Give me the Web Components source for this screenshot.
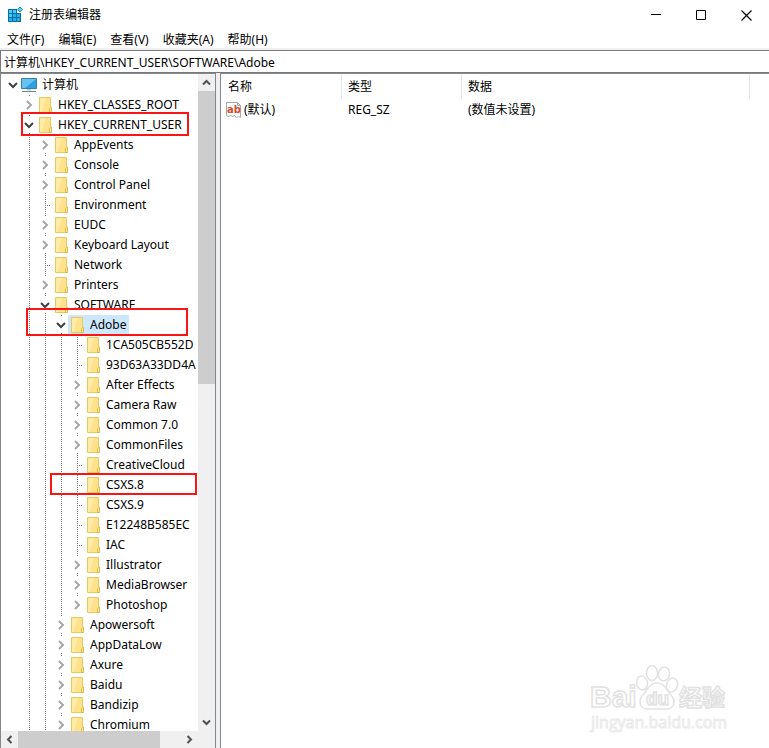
<!DOCTYPE html>
<html lang="zh-CN">
<head>
<meta charset="utf-8">
<title>注册表编辑器</title>
<style>
  html, body {
    height: 100%;
    margin: 0;
  }
  body {
    background: #fff;
    color: #000;
    font: 12px/20px "Noto Sans", "Noto Sans CJK SC", sans-serif;
    overflow: hidden;
  }
</style>
</head>
<body>
<reg-window>
  <title-bar slot="title">注册表编辑器</title-bar>
  <menu-bar slot="menu">
    <menu-entry>文件(F)</menu-entry>
    <menu-entry>编辑(E)</menu-entry>
    <menu-entry>查看(V)</menu-entry>
    <menu-entry>收藏夹(A)</menu-entry>
    <menu-entry>帮助(H)</menu-entry>
  </menu-bar>
  <address-bar slot="address" value="计算机\HKEY_CURRENT_USER\SOFTWARE\Adobe"></address-bar>
  <key-tree slot="tree">
    <reg-key name="计算机" icon="computer" open root>
      <reg-key name="HKEY_CLASSES_ROOT" branch></reg-key>
      <reg-key name="HKEY_CURRENT_USER" open>
        <reg-key name="AppEvents" branch></reg-key>
        <reg-key name="Console" branch></reg-key>
        <reg-key name="Control Panel" branch></reg-key>
        <reg-key name="Environment"></reg-key>
        <reg-key name="EUDC" branch></reg-key>
        <reg-key name="Keyboard Layout" branch></reg-key>
        <reg-key name="Network"></reg-key>
        <reg-key name="Printers" branch></reg-key>
        <reg-key name="SOFTWARE" open>
          <reg-key name="Adobe" open selected>
            <reg-key name="1CA505CB552D"></reg-key>
            <reg-key name="93D63A33DD4A"></reg-key>
            <reg-key name="After Effects" branch></reg-key>
            <reg-key name="Camera Raw" branch></reg-key>
            <reg-key name="Common 7.0" branch></reg-key>
            <reg-key name="CommonFiles" branch></reg-key>
            <reg-key name="CreativeCloud"></reg-key>
            <reg-key name="CSXS.8"></reg-key>
            <reg-key name="CSXS.9"></reg-key>
            <reg-key name="E12248B585EC"></reg-key>
            <reg-key name="IAC"></reg-key>
            <reg-key name="Illustrator" branch></reg-key>
            <reg-key name="MediaBrowser" branch></reg-key>
            <reg-key name="Photoshop" branch last></reg-key>
          </reg-key>
          <reg-key name="Apowersoft" branch></reg-key>
          <reg-key name="AppDataLow" branch></reg-key>
          <reg-key name="Axure" branch></reg-key>
          <reg-key name="Baidu" branch></reg-key>
          <reg-key name="Bandizip" branch></reg-key>
          <reg-key name="Chromium" branch></reg-key>
        </reg-key>
      </reg-key>
    </reg-key>
  </key-tree>
  <value-list slot="values"></value-list>
  <mark-box slot="overlay" style="--x: 21px; --y: 112px; --w: 168px; --h: 24px"></mark-box>
  <mark-box slot="overlay" style="--x: 26px; --y: 308px; --w: 162px; --h: 28px"></mark-box>
  <mark-box slot="overlay" style="--x: 50px; --y: 473px; --w: 147px; --h: 22px"></mark-box>
  <site-mark slot="overlay"></site-mark>
</reg-window>

<script>
function define(name, html, setup) {
  const template = document.createElement('template');
  template.innerHTML = html;

  window.customElements.define(name, class extends HTMLElement {
    constructor() {
      super();
      this.attachShadow({ mode: 'open' });
      this.shadowRoot.appendChild(template.content.cloneNode(true));
    }

    connectedCallback() {
      if (setup) setup.call(this, this.shadowRoot);
    }
  });
}

define('reg-window', `
  <style>
    :host {
      display: flex;
      flex-direction: column;
      position: relative;
      height: 100vh;
      overflow: hidden;
    }
    main {
      flex: 1;
      min-height: 0;
      display: grid;
      grid-template-columns: 216px 1fr;
      gap: 4px;
      background: #f0f0f0;
    }
  </style>
  <slot name="title"></slot>
  <slot name="menu"></slot>
  <slot name="address"></slot>
  <main>
    <slot name="tree"></slot>
    <slot name="values"></slot>
  </main>
  <slot name="overlay"></slot>
`);

define('title-bar', `
  <style>
    :host {
      display: flex;
      align-items: center;
      height: 30px;
      padding-left: 7px;
    }
    h1 {
      flex: 1;
      margin: 0 0 0 6px;
      font-size: 12px;
      font-weight: normal;
    }
    button {
      width: 45px;
      height: 30px;
      padding: 0;
      border: 0;
      background: none;
    }
    button:hover { background: #e5e5e5; }
    svg { display: block; }
    button svg { margin: auto; }
  </style>
  <svg width="16" height="16" viewBox="0 0 16 16">
    <path d="M1 2h9v4h4v9H1z" fill="#0b6ea6"/>
    <path d="M2 3h3v3H2zM6 3h3v3H6zM2 7h3v3H2z" fill="#45cbf5"/>
    <path d="M6 7h3v3H6zM10 7h3v3h-3zM2 11h3v3H2zM6 11h3v3H6zM10 11h3v3h-3z" fill="#1fb0e8"/>
    <path d="M13 0l2.500 2.500L13 5l-2.500-2.500z" fill="#62cdf2" stroke="#1687b6"/>
  </svg>
  <h1><slot></slot></h1>
  <button aria-label="最小化"><svg width="11" height="11"><path d="M0 4.500h10" stroke="#000"/></svg></button>
  <button aria-label="最大化"><svg width="11" height="11"><path d="M.5.5h9v9h-9z" fill="none" stroke="#000"/></svg></button>
  <button aria-label="关闭"><svg width="11" height="11"><path d="M.5.5l10 10M10.500.5l-10 10" stroke="#000" stroke-width="1.200"/></svg></button>
`);

define('menu-bar', `
  <style>
    :host {
      display: flex;
      height: 18px;
      border-bottom: 2px solid #f0f0f0;
    }
  </style>
  <slot></slot>
`);

define('menu-entry', `
  <style>
    :host { display: block; }
    button {
      height: 18px;
      padding: 0 7px;
      border: 0;
      background: none;
      font: inherit;
      color: inherit;
      line-height: 18px;
    }
    button:hover { background: #e5f3ff; }
  </style>
  <button><slot></slot></button>
`);

define('address-bar', `
  <style>
    :host { display: block; }
    input {
      box-sizing: border-box;
      display: block;
      width: 100%;
      height: 23px;
      padding: 0 3px;
      border: 1px solid #7a7a7a;
      border-right: 0;
      border-radius: 0;
      outline: 0;
      background: #fff;
      color: inherit;
      font: inherit;
    }
  </style>
  <input type="text" aria-label="地址">
`, function (root) {
  root.querySelector('input').value = this.getAttribute('value');
});

define('scroll-bar', `
  <style>
    :host {
      display: flex;
      background: #f0f0f0;
    }
    :host([vertical]) { flex-direction: column; }
    button {
      display: grid;
      place-items: center;
      flex: none;
      width: 17px;
      height: 17px;
      padding: 0;
      border: 0;
      background: none;
    }
    :host([vertical]) button { width: auto; }
    .back svg { transform: rotate(180deg); }
    :host([vertical]) .forward svg { transform: rotate(90deg); }
    :host([vertical]) .back svg { transform: rotate(-90deg); }
    path { fill: none; stroke: #505050; stroke-width: 2; }
    .track {
      flex: 1;
      display: flex;
      flex-direction: inherit;
    }
    .thumb {
      flex: 0 0 var(--size);
      background: #cdcdcd;
    }
  </style>
  <button class="back" aria-label="向前滚动"><svg width="9" height="9"><path d="M2.500 1L6 4.500 2.500 8"/></svg></button>
  <div class="track"><div class="thumb"></div></div>
  <button class="forward" aria-label="向后滚动"><svg width="9" height="9"><path d="M2.500 1L6 4.500 2.500 8"/></svg></button>
`);

define('key-tree', `
  <style>
    :host {
      box-sizing: border-box;
      display: grid;
      grid-template: minmax(0, 1fr) 17px / minmax(0, 1fr) 17px;
      min-width: 0;
      min-height: 0;
      border: 1px solid #828790;
      border-bottom: 0;
      background: #f0f0f0;
    }
    .keys {
      overflow: hidden;
      padding: 1px 0 0 4px;
      background: #fff;
      white-space: nowrap;
    }
    .v { --size: 47%; }
    .h { --size: 87%; }
  </style>
  <div class="keys" role="tree"><slot></slot></div>
  <scroll-bar class="v" vertical></scroll-bar>
  <scroll-bar class="h"></scroll-bar>
`);

const folder = `
  <svg width="16" height="16" viewBox="0 0 16 16">
    <path d="M2.500.5h11v9l1 1v5h-12z" fill="#ffe38c" stroke="#e9c75d"/>
    <path d="M3 1h6L5 15H3z" fill="#fff0b8" opacity=".6"/>
    <path d="M12.500 15.500v-4l1-1h1v5z" fill="#ffe9a2" stroke="#e3bb42"/>
  </svg>`;

const computer = `
  <svg width="16" height="16" viewBox="0 0 16 16">
    <path d="M.5 1.500h15v10H.5z" fill="#2d9fe3" stroke="#3b7ea6"/>
    <path d="M1 2h14L4 11H1z" fill="#66c3f3"/>
    <path d="M6 12h4v1.500H6z" fill="#b5c7d2"/>
    <path d="M1 14.500h14" stroke="#6f8796"/>
  </svg>`;

define('reg-key', `
  <style>
    :host {
      display: block;
      background: linear-gradient(#808080 50%, transparent 50%) 8px 0 / 1px 2px repeat-y;
    }
    :host([root]) { background: none; }
    .row {
      display: flex;
      align-items: center;
      height: 20px;
    }
    :host([last]) .row { background: linear-gradient(transparent 50%, #fff 50%); }
    button {
      display: grid;
      place-items: center;
      flex: none;
      width: 15px;
      height: 16px;
      padding: 0;
      border: 0;
      background: #fff;
    }
    .leaf {
      flex: none;
      width: 15px;
      height: 1px;
      background: linear-gradient(90deg, #808080 50%, transparent 50%) 10px 0 / 2px 1px no-repeat,
        linear-gradient(90deg, #808080 50%, transparent 50%) 12px 0 / 2px 1px no-repeat;
    }
    button path { fill: none; stroke: #a6a6a6; stroke-width: 2; }
    :host([open]) button path { stroke: #404040; }
    :host([open]) button svg { transform: rotate(90deg); }
    .item {
      display: flex;
      align-items: center;
      height: 20px;
      padding: 0 3px 0 1px;
    }
    .item svg { flex: none; }
    .name { padding-left: 5px; }
    :host([selected]) .item { background: #cce8ff; }
    .children { display: none; padding-left: 16px; }
    :host([open]) .children { display: block; }
  </style>
  <div class="row" role="treeitem">
    <span class="item"><span class="name"></span></span>
  </div>
  <div class="children" role="group"><slot></slot></div>
`, function (root) {
  const icon = this.getAttribute('icon') === 'computer' ? computer : folder;
  const isBranch = this.hasAttribute('branch') || this.hasAttribute('open');

  root.querySelector('.name').textContent = this.getAttribute('name');
  root.querySelector('.item').insertAdjacentHTML('afterbegin', icon);
  root.querySelector('.row').insertAdjacentHTML('afterbegin', isBranch
    ? '<button aria-label="展开"><svg width="10" height="10"><path d="M3 1l4 4-4 4"/></svg></button>'
    : '<span class="leaf"></span>');

  if (isBranch) {
    root.querySelector('button').addEventListener('click', () => {
      this.toggleAttribute('open');
    });
  }
});

define('value-list', `
  <style>
    :host {
      display: block;
      min-width: 0;
      border: 1px solid #828790;
      border-width: 1px 0 0 1px;
      background: #fff;
    }
    table {
      width: 100%;
      table-layout: fixed;
      border-collapse: separate;
      border-spacing: 0;
      text-align: left;
    }
    .short { width: 121px; }
    .type { width: 120px; }
    .rest { width: 19px; }
    th, td {
      box-sizing: border-box;
      padding: 0 0 0 6px;
      font-weight: normal;
      white-space: nowrap;
    }
    th {
      height: 25px;
      border-right: 1px solid #e5e5e5;
    }
    th:first-child { padding-left: 7px; }
    th:last-child { border: 0; }
    td { height: 22px; }
    td:first-child { padding-left: 4px; }
    .name {
      display: flex;
      align-items: center;
      gap: 2px;
    }
  </style>
  <table>
    <colgroup><col class="short"><col class="type"><col><col class="rest"></colgroup>
    <thead><tr><th>名称</th><th>类型</th><th>数据</th><th></th></tr></thead>
    <tbody>
      <tr>
        <td>
          <span class="name">
            <svg width="17" height="16" viewBox="0 0 17 16">
              <path d="M1.500.5h11l3 3v12l-2-1-2 1-2-2-2 1-2-1-2 1-2-1z" fill="#fff" stroke="#a8a8a8"/>
              <path d="M12.500.5v3h3" fill="none" stroke="#a8a8a8"/>
              <text x="2" y="11" font-family="DejaVu Sans" font-size="10" font-weight="bold" fill="#d6492a">ab</text>
            </svg>
            (默认)
          </span>
        </td>
        <td>REG_SZ</td>
        <td>(数值未设置)</td>
        <td></td>
      </tr>
    </tbody>
  </table>
`);

// red frame drawn over the tree
define('mark-box', `
  <style>
    :host {
      box-sizing: border-box;
      position: absolute;
      left: var(--x);
      top: var(--y);
      width: var(--w);
      height: var(--h);
      border: 2px solid #fa1414;
      pointer-events: none;
    }
  </style>
`);

define('site-mark', `
  <style>
    :host {
      position: absolute;
      right: 39px;
      bottom: 14px;
      pointer-events: none;
    }
    svg { display: block; }
    text { font-family: "Liberation Sans", "Noto Sans CJK SC", sans-serif; font-weight: bold; }
    .outer { fill: #fff; stroke: #e2e2e2; stroke-width: 1.500; }
    .url {
      fill: #fff;
      stroke: #ebebeb;
      font-family: "Open Sans", sans-serif;
      font-weight: normal;
    }
  </style>
  <svg width="142" height="72" viewBox="0 0 142 72">
    <g class="outer">
      <text x="2" y="45" font-size="30">Bai</text>
      <ellipse cx="54" cy="21" rx="5.500" ry="7" transform="rotate(-10 54 21)"/>
      <ellipse cx="64" cy="11" rx="5.500" ry="7.500"/>
      <ellipse cx="76" cy="12" rx="5.500" ry="7" transform="rotate(12 76 12)"/>
      <ellipse cx="84" cy="23" rx="5.500" ry="7" transform="rotate(18 84 23)"/>
      <path d="M69 21c-8 0-10 8-14 12-5 5-4 14 5 14h18c9 0 10-9 5-14-4-4-6-12-14-12z"/>
      <text x="58" y="43" font-size="19">du</text>
      <text x="91" y="44" font-size="23">经验</text>
    </g>
    <text class="url" x="3" y="66" font-size="16">jingyan.baidu.com</text>
  </svg>
`);
</script>
</body>
</html>
